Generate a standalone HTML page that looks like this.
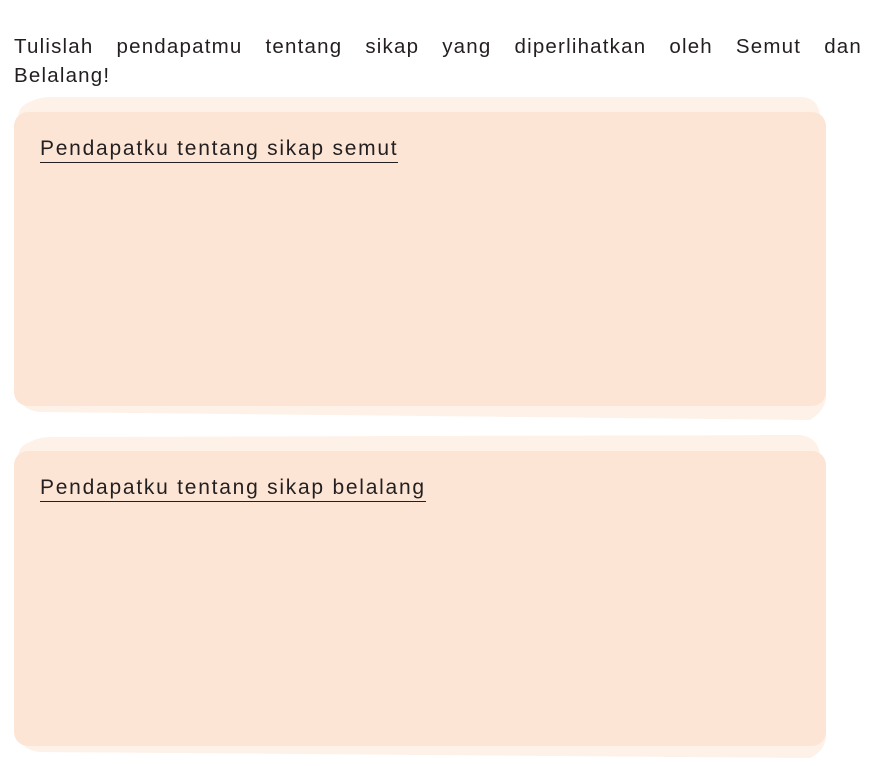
<!DOCTYPE html>
<html><head><style>
body{margin:0;width:870px;height:766px;background:#fff;position:relative;font-family:"Liberation Sans",sans-serif;color:#231f20;overflow:hidden}
.t{position:absolute;left:14px;width:848px;font-size:20.5px;line-height:29px;white-space:nowrap;letter-spacing:1.2px}
.j{text-align:justify;text-align-last:justify}
.h{position:absolute;left:40px;font-size:21px;letter-spacing:1.75px;border-bottom:1.5px solid #231f20;line-height:24px;padding-bottom:1px}
</style></head><body>
<svg width="870" height="766" style="position:absolute;left:0;top:0">
<path d="M30 102 Q40 96 60 97 L800 97 Q818 97 820 115 L826 395 Q826 410 810 420 L40 412 Q20 410 20 395 L18 118 Q18 106 30 102Z" fill="#fdf1e8"/>
<rect x="14" y="112" width="812" height="294" rx="14" fill="#fde5d6"/>
<path d="M30 442 Q40 436 60 437 L800 435 Q818 437 820 455 L826 735 Q826 750 810 758 L40 752 Q20 750 20 735 L18 458 Q18 446 30 442Z" fill="#fdf1e8"/>
<rect x="14" y="451" width="812" height="295" rx="14" fill="#fde5d6"/>
</svg>
<div class="t j" style="top:32px">Tulislah pendapatmu tentang sikap yang diperlihatkan oleh Semut dan</div>
<div class="t" style="top:61px">Belalang!</div>
<div class="h" style="top:137px">Pendapatku tentang sikap semut</div>
<div class="h" style="top:476px">Pendapatku tentang sikap belalang</div>
</body></html>
